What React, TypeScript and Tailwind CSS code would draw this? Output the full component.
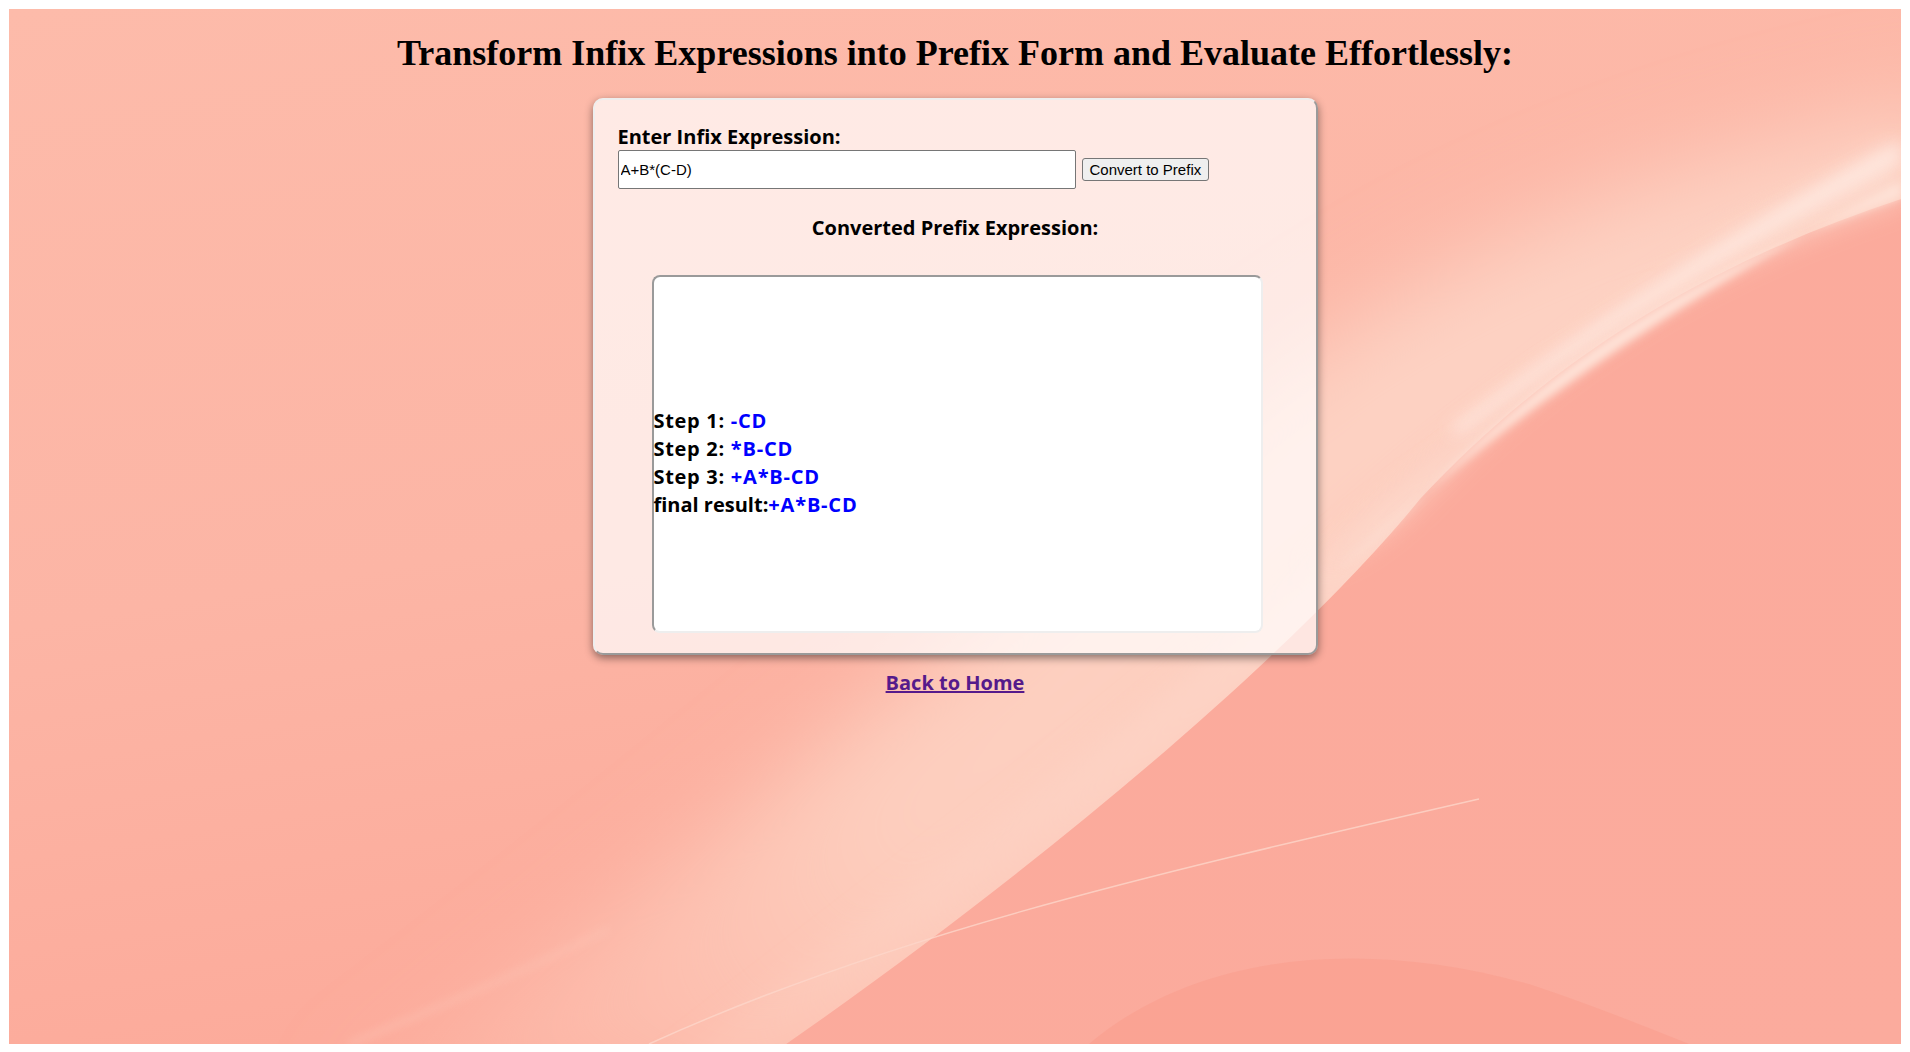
import React from "react";

function Background() {
  return (
    <svg
      className="absolute inset-0 h-full w-full"
      viewBox="0 0 1892 1035"
      preserveAspectRatio="none"
      aria-hidden="true"
    >
      <defs>
        <linearGradient id="base" x1="0" y1="0" x2="0.3" y2="1">
          <stop offset="0" stopColor="#fdbbaa" />
          <stop offset="0.55" stopColor="#fcb5a5" />
          <stop offset="1" stopColor="#fcaa9a" />
        </linearGradient>
        <linearGradient id="dark" x1="0" y1="0" x2="1" y2="1">
          <stop offset="0" stopColor="#fbaa9b" />
          <stop offset="1" stopColor="#fbab9d" />
        </linearGradient>
        <linearGradient
          id="bandGrad"
          gradientUnits="userSpaceOnUse"
          x1="350"
          y1="1035"
          x2="1400"
          y2="350"
        >
          <stop offset="0" stopColor="#fdc4b4" stopOpacity="0.3" />
          <stop offset="0.45" stopColor="#fdcebe" stopOpacity="1" />
          <stop offset="1" stopColor="#fdd2c3" stopOpacity="1" />
        </linearGradient>
        <linearGradient
          id="edgeGrad"
          gradientUnits="userSpaceOnUse"
          x1="560"
          y1="1035"
          x2="1500"
          y2="400"
        >
          <stop offset="0" stopColor="#fdd0c1" stopOpacity="0.1" />
          <stop offset="0.5" stopColor="#fdd4c6" stopOpacity="0.75" />
          <stop offset="1" stopColor="#fdd8cb" stopOpacity="1" />
        </linearGradient>
        <filter id="blurBig" x="-20%" y="-20%" width="140%" height="140%">
          <feGaussianBlur stdDeviation="45" />
        </filter>
        <filter id="blurMid" x="-20%" y="-20%" width="140%" height="140%">
          <feGaussianBlur stdDeviation="14" />
        </filter>
        <filter id="blurSoft" x="-20%" y="-20%" width="140%" height="140%">
          <feGaussianBlur stdDeviation="8" />
        </filter>
        <filter id="blurSmall" x="-20%" y="-20%" width="140%" height="140%">
          <feGaussianBlur stdDeviation="4" />
        </filter>
      </defs>
      <rect x="0" y="0" width="1892" height="1035" fill="url(#base)" />
      {/* broad light band */}
      <path
        d="M 320 1100 C 620 900, 930 640, 1250 380 C 1450 230, 1680 140, 1950 90 L 1950 260 C 1700 300, 1500 420, 1360 560 C 1150 760, 950 930, 760 1100 Z"
        fill="url(#bandGrad)"
        filter="url(#blurBig)"
      />
      <path
        d="M 600 1100 C 870 900, 1110 720, 1300 560 C 1480 420, 1650 300, 1950 200 L 1950 250 C 1700 320, 1500 440, 1380 560 C 1180 760, 980 920, 780 1100 Z"
        fill="url(#edgeGrad)"
        filter="url(#blurMid)"
      />
      {/* subtle bottom-left band edge */}
      <path
        d="M 340 1035 C 450 990, 520 960, 600 920"
        fill="none"
        stroke="#fdc6b7"
        strokeWidth="6"
        opacity="0.45"
        filter="url(#blurSmall)"
      />
      {/* darker lower-right region */}
      <path
        d="M 770 1040 C 1030 860, 1290 640, 1411 490 C 1551 340, 1711 250, 1892 190 L 1892 1035 L 770 1035 Z"
        fill="url(#dark)"
      />
      {/* bright streak near top right */}
      <path
        d="M 1300 560 C 1450 420, 1640 260, 1892 130 L 1892 190 C 1711 250, 1551 340, 1411 490 C 1370 530, 1330 555, 1300 560 Z"
        fill="#fdd9cc"
        opacity="0.8"
        filter="url(#blurMid)"
      />
      <path
        d="M 1440 420 C 1560 330, 1700 235, 1892 132 L 1892 152 C 1700 250, 1560 345, 1450 425 Z"
        fill="#ffeee7"
        opacity="0.75"
        filter="url(#blurSoft)"
      />
      <path
        d="M 1330 560 C 1470 430, 1650 300, 1892 172 L 1892 188 C 1711 250, 1551 340, 1411 490 C 1380 520, 1350 545, 1330 560 Z"
        fill="#fee2d7"
        filter="url(#blurSmall)"
      />
      {/* thin line */}
      <path
        d="M 640 1035 C 870 930, 1120 870, 1470 790"
        fill="none"
        stroke="#fdd6c9"
        strokeWidth="1.5"
        opacity="0.8"
      />
      {/* dark dome bottom right */}
      <path
        d="M 1080 1035 C 1180 950, 1340 925, 1520 975 C 1580 995, 1630 1015, 1680 1035 Z"
        fill="#f99d8d"
        opacity="0.55"
      />
    </svg>
  );
}

export default function App() {
  return (
    <div className="bg-white px-[9px] pt-[9px] pb-[8px]">
      <div className="relative h-[1035px] w-full overflow-hidden">
        <Background />
        <div className="relative flex flex-col items-center pt-[24px]">
          <h1 className="font-['Liberation_Serif','Times_New_Roman',serif] text-[36px] font-bold leading-[41px] text-black">
            Transform Infix Expressions into Prefix Form and Evaluate Effortlessly:
          </h1>
          <div className="mt-[24px] w-[725px] rounded-[10px] border-2 border-[#eeeeee] [border-style:outset] bg-white/70 px-[23px] pt-[23px] pb-[20px] font-['Open_Sans','Noto_Sans',sans-serif] shadow-[0_3px_8px_rgba(0,0,0,0.45)]">
            <label className="block text-[20px] font-bold leading-[27px] text-black">
              Enter Infix Expression:
            </label>
            <div className="flex items-center gap-[6px]">
              <input
                type="text"
                defaultValue="A+B*(C-D)"
                className="h-[39px] w-[458px] rounded-[2px] border border-[#767676] bg-white px-[2px] font-['Liberation_Sans',Arial,sans-serif] text-[15px] text-black outline-none"
              />
              <button
                type="button"
                className="h-[23px] rounded-[3px] border border-[#767676] bg-[#efefef] px-[7px] font-['Liberation_Sans',Arial,sans-serif] text-[15px] leading-[19px] text-black"
              >
                Convert to Prefix
              </button>
            </div>
            <h3 className="mt-[25px] text-center text-[20px] font-bold leading-[27px] text-black">
              Converted Prefix Expression:
            </h3>
            <div className="mt-[34px] ml-[34px] h-[358px] w-[611px] rounded-[8px] border-2 border-[#eeeeee] [border-style:inset] bg-white pt-[130px] text-[20px] font-bold leading-[28px] text-black">
              <div>
                <span className="tracking-[0.7px]">Step 1: </span>
                <span className="tracking-[0.8px] text-[#0000ff]">-CD</span>
              </div>
              <div>
                <span className="tracking-[0.7px]">Step 2: </span>
                <span className="tracking-[0.8px] text-[#0000ff]">*B-CD</span>
              </div>
              <div>
                <span className="tracking-[0.7px]">Step 3: </span>
                <span className="tracking-[0.8px] text-[#0000ff]">+A*B-CD</span>
              </div>
              <div>
                final result:
                <span className="tracking-[0.8px] text-[#0000ff]">+A*B-CD</span>
              </div>
            </div>
          </div>
          <a
            href="#"
            className="mt-[14px] font-['Open_Sans','Noto_Sans',sans-serif] text-[20px] font-bold leading-[27px] text-[#551a8b] underline"
          >
            Back to Home
          </a>
        </div>
      </div>
    </div>
  );
}
